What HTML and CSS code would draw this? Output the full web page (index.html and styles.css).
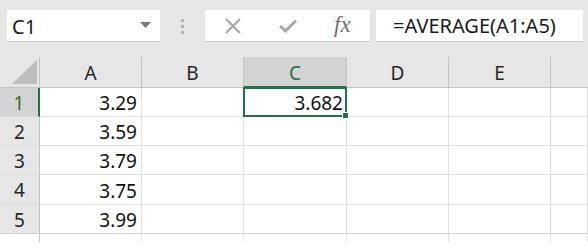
FILE: index.html
```html
<!DOCTYPE html>
<html lang="en">
<head>
    <meta charset="UTF-8">
    <meta name="viewport" content="width=device-width, initial-scale=1.0">
    <title>AVERAGE</title>
    <link rel="stylesheet" href="styles.css">
</head>
<body>

    <div class="toolbar">
        <div class="namebox">
            <span>C1</span>
            <svg class="arrow" width="11" height="6" viewBox="0 0 11 6"><path d="M0 0 H11 L5.5 6 Z" fill="#7b7b7b"/></svg>
        </div>
        <div class="dots">
            <i></i><i></i><i></i>
        </div>
        <div class="fxbox">
            <svg class="icon" width="18" height="16" viewBox="0 0 18 16"><path d="M2 1 L16 15 M16 1 L2 15" stroke="#a8a8a8" stroke-width="2.2" fill="none"/></svg>
            <svg class="icon" width="18" height="14" viewBox="0 0 18 14"><path d="M1 7 L6.5 12 L17 1.5" stroke="#a8a8a8" stroke-width="3" fill="none"/></svg>
            <span class="fx">fx</span>
        </div>
        <div class="formula">=AVERAGE(A1:A5)</div>
    </div>

    <div class="sheet">
        <div class="hd corner"><svg width="25" height="24" viewBox="0 0 25 24"><path d="M25 0 V24 H0 Z" fill="#bdbdbd"/></svg></div>
        <div class="hd col">A</div>
        <div class="hd col">B</div>
        <div class="hd col sel-col">C</div>
        <div class="hd col">D</div>
        <div class="hd col">E</div>
        <div class="hd col last"></div>

        <div class="hd row sel-row">1</div>
        <div class="cell">3.29</div>
        <div class="cell"></div>
        <div class="cell active">3.682</div>
        <div class="cell"></div>
        <div class="cell"></div>
        <div class="cell"></div>

        <div class="hd row">2</div>
        <div class="cell">3.59</div>
        <div class="cell"></div>
        <div class="cell"></div>
        <div class="cell"></div>
        <div class="cell"></div>
        <div class="cell"></div>

        <div class="hd row">3</div>
        <div class="cell">3.79</div>
        <div class="cell"></div>
        <div class="cell"></div>
        <div class="cell"></div>
        <div class="cell"></div>
        <div class="cell"></div>

        <div class="hd row">4</div>
        <div class="cell">3.75</div>
        <div class="cell"></div>
        <div class="cell"></div>
        <div class="cell"></div>
        <div class="cell"></div>
        <div class="cell"></div>

        <div class="hd row bottom">5</div>
        <div class="cell bottom">3.99</div>
        <div class="cell bottom"></div>
        <div class="cell bottom"></div>
        <div class="cell bottom"></div>
        <div class="cell bottom"></div>
        <div class="cell bottom"></div>

        <div class="hd row tail"></div>
        <div class="cell tail"></div>
        <div class="cell tail"></div>
        <div class="cell tail"></div>
        <div class="cell tail"></div>
        <div class="cell tail"></div>
        <div class="cell tail"></div>
    </div>

</body>
</html>
```

FILE: styles.css
```css
body {
    margin: 0;
    background: white;
    font-family: "Noto Sans", "Open Sans", sans-serif;
    color: #1a1a1a;
}
.toolbar {
    display: flex;
    align-items: flex-start;
    height: 57px;
    box-sizing: border-box;
    padding: 10px 5px 0 7px;
    background: #e6e6e6;
}
.namebox {
    width: 153px;
    height: 32px;
    box-sizing: border-box;
    background: white;
    border-bottom: 1px solid #c9c9c9;
    display: flex;
    align-items: center;
    justify-content: space-between;
    padding: 1px 9px 0 5px;
    font-size: 20px;
}
.namebox .arrow {
    margin-top: -3px;
}
.dots {
    width: 45px;
    height: 32px;
    display: flex;
    flex-direction: column;
    align-items: center;
    justify-content: center;
    gap: 3px;
}
.dots i {
    display: block;
    width: 3px;
    height: 3px;
    background: #b4b4b4;
}
.fxbox {
    width: 165px;
    height: 32px;
    box-sizing: border-box;
    background: white;
    border-bottom: 1px solid #c9c9c9;
    display: flex;
    align-items: center;
    padding-left: 19px;
}
.fxbox .icon:nth-child(2) {
    margin-left: 37px;
}
.fx {
    margin-left: 37px;
    font-family: "Liberation Serif", serif;
    font-style: italic;
    font-size: 23px;
    color: #707070;
    margin-top: -2px;
}
.formula {
    flex: 1;
    margin-left: 6px;
    height: 32px;
    box-sizing: border-box;
    background: white;
    border-bottom: 1px solid #c9c9c9;
    font-size: 20px;
    padding: 1px 0 0 17px;
    line-height: 30px;
}
.sheet {
    display: grid;
    grid-template-columns: 40px 102px 102px 103px 102px 102px 1fr;
    grid-template-rows: 31px 29px 29px 29px 30px 29px 8px;
    font-size: 19px;
    color: #1a1a1a;
}
.hd {
    background: #e6e6e6;
    box-sizing: border-box;
    display: flex;
    align-items: center;
    justify-content: center;
}
.corner {
    border-right: 1px solid #c4c4c4;
    border-bottom: 1px solid #c4c4c4;
    justify-content: flex-end;
    align-items: flex-end;
    padding: 0 2px 3px 0;
}
.col {
    border-right: 1px solid #c4c4c4;
    border-bottom: 1px solid #c4c4c4;
    padding-top: 2px;
    color: #262626;
}
.col.last {
    border-right: none;
}
.sel-col {
    background: #d3d3d3;
    color: #217346;
    border-bottom: 2px solid #217346;
}
.row {
    border-right: 1px solid #c4c4c4;
    border-bottom: 1px solid #dadada;
    padding-top: 1px;
    color: #262626;
}
.sel-row {
    background: #d3d3d3;
    color: #3d6b2a;
    border-right: 2px solid #217346;
}
.row.tail {
    background: white;
}
.cell {
    box-sizing: border-box;
    border-right: 1px solid #e1e1e1;
    border-bottom: 1px solid #e1e1e1;
    display: flex;
    align-items: center;
    justify-content: flex-end;
    padding: 2px 4px 0 0;
    color: #111;
}
.bottom {
    border-bottom: 1px solid #d2d2d2;
}
.tail {
    border-bottom: none;
}
.active {
    position: relative;
    margin: -1px 0 0 -1px;
    border: 2px solid #217346;
    padding-right: 2px;
}
.active::after {
    content: "";
    position: absolute;
    right: -4px;
    bottom: -4px;
    width: 5px;
    height: 5px;
    background: #217346;
    border: 1px solid white;
}
```
